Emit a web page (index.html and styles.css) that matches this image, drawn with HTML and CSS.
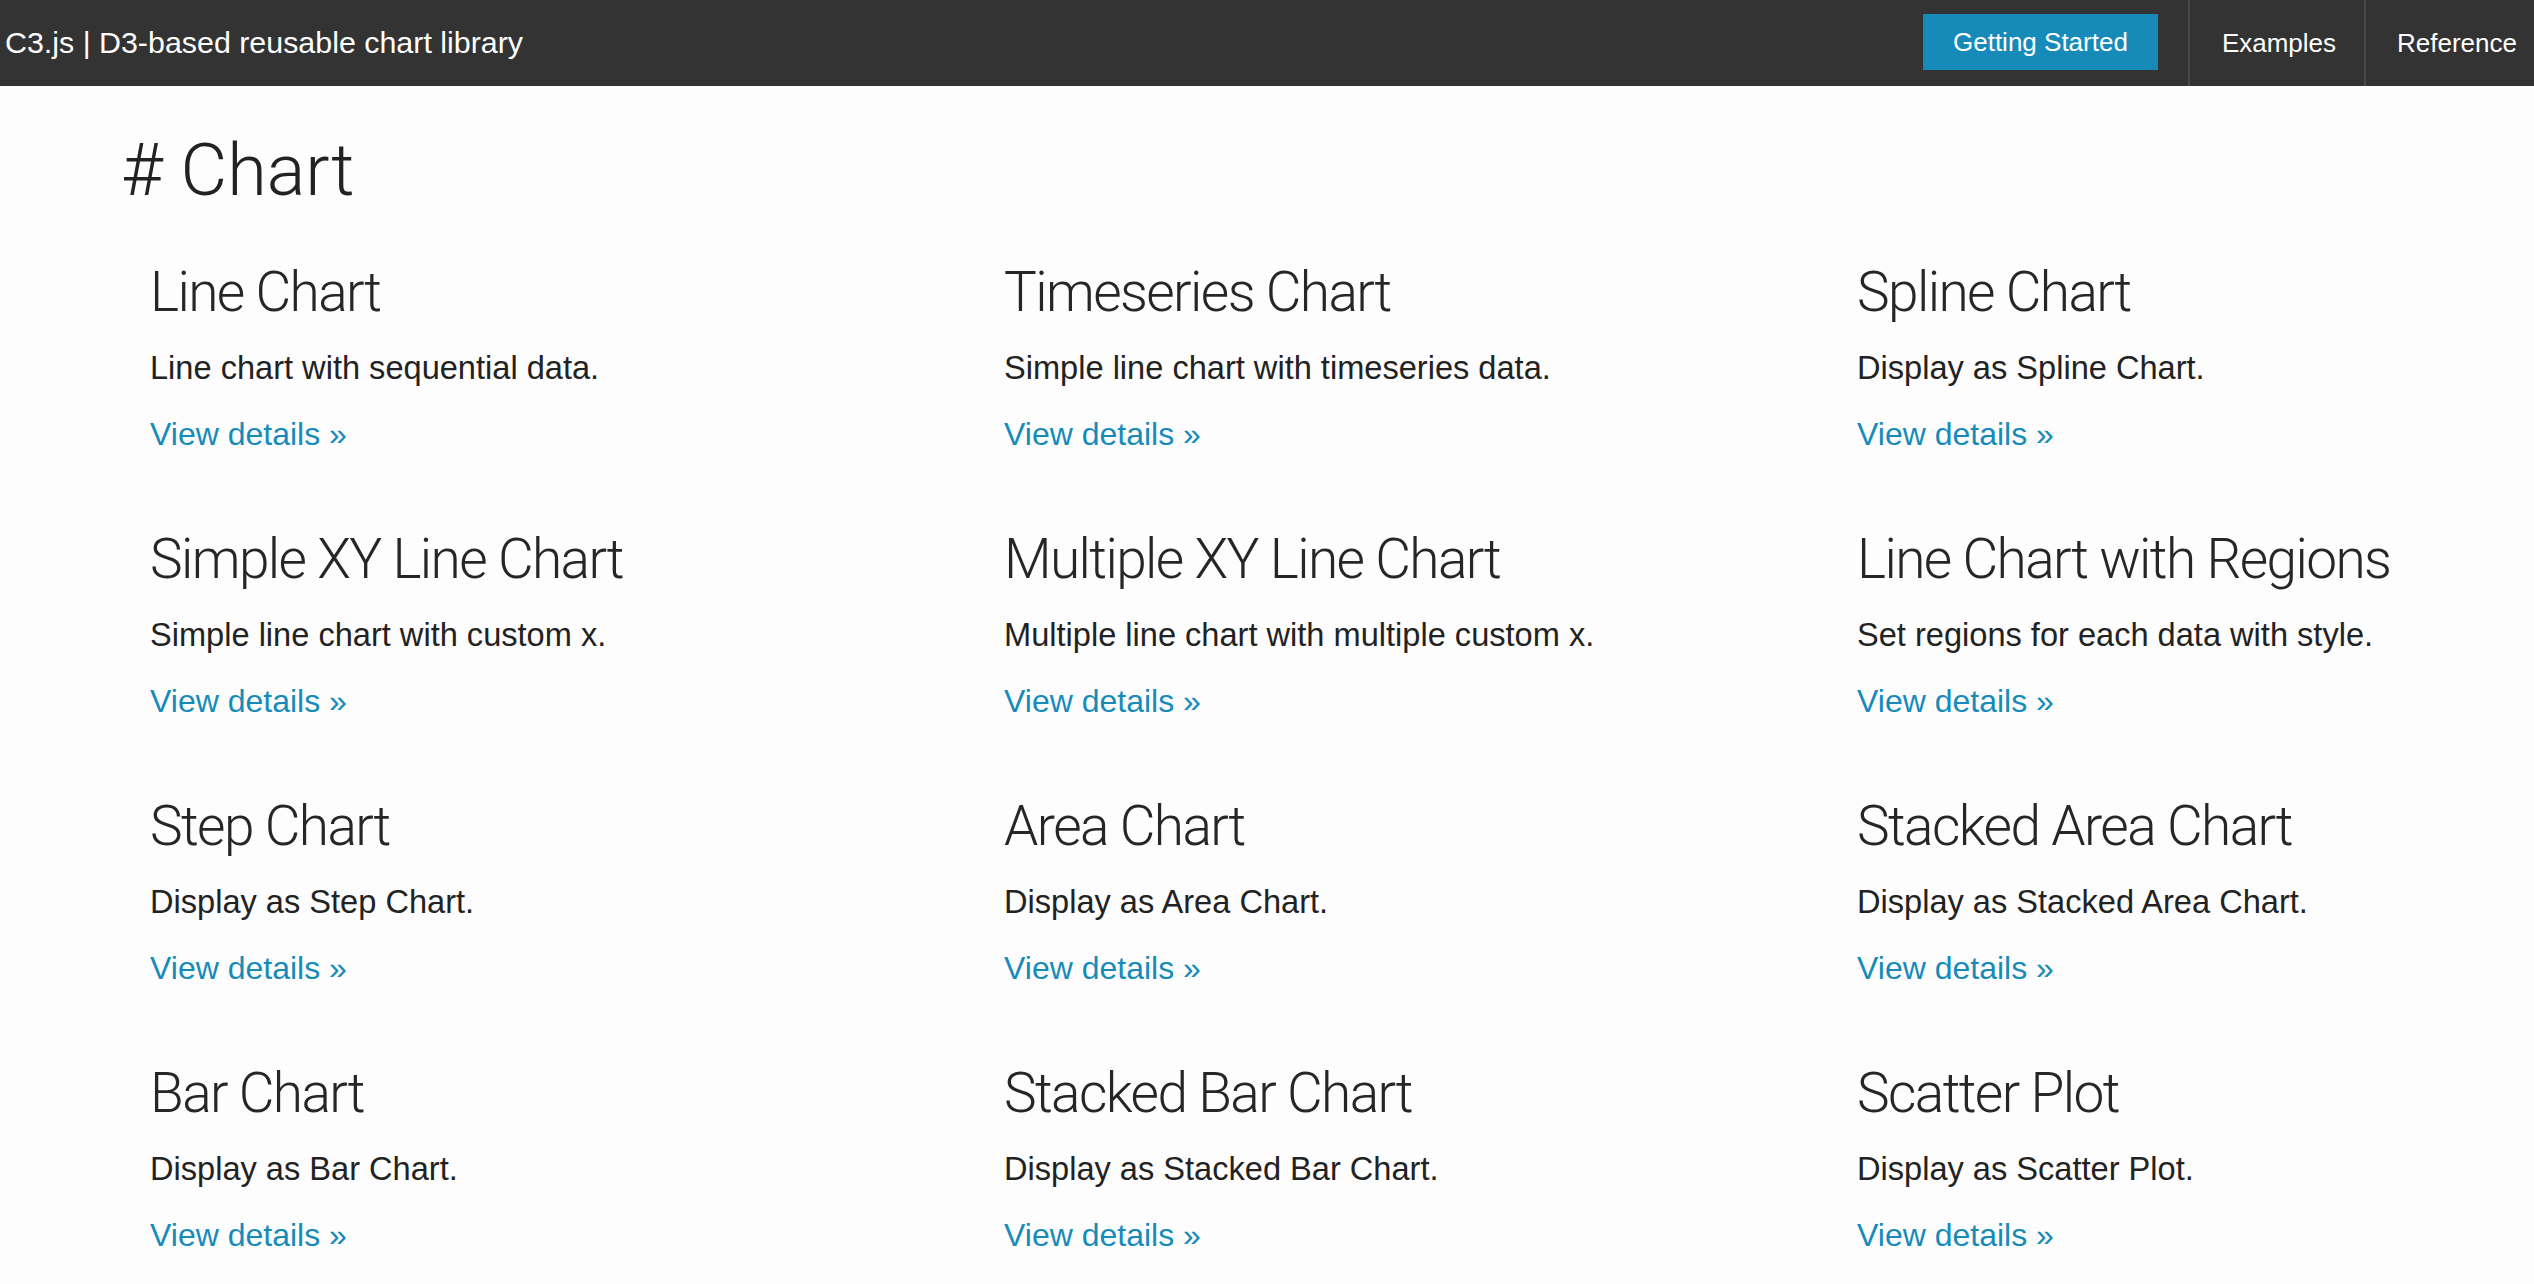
FILE: index.html
```html
<!DOCTYPE html>
<html lang="en">
<head>
<meta charset="utf-8">
<title>C3.js | D3-based reusable chart library</title>
<link rel="stylesheet" href="styles.css">
</head>
<body>
<header class="navbar">
  <a class="brand" href="#">C3.js | D3-based reusable chart library</a>
  <nav class="nav">
    <a class="nav-btn" href="#">Getting Started</a>
    <a class="nav-link" href="#">Examples</a>
    <a class="nav-link nav-last" href="#">Reference</a>
  </nav>
</header>
<main class="container">
  <h1 class="page-title"># Chart</h1>
  <div class="grid">
    <section class="card">
      <h3>Line Chart</h3>
      <p>Line chart with sequential data.</p>
      <p class="link-line"><a class="more" href="#">View details »</a></p>
    </section>
    <section class="card">
      <h3>Timeseries Chart</h3>
      <p>Simple line chart with timeseries data.</p>
      <p class="link-line"><a class="more" href="#">View details »</a></p>
    </section>
    <section class="card">
      <h3>Spline Chart</h3>
      <p>Display as Spline Chart.</p>
      <p class="link-line"><a class="more" href="#">View details »</a></p>
    </section>
    <section class="card">
      <h3>Simple XY Line Chart</h3>
      <p>Simple line chart with custom x.</p>
      <p class="link-line"><a class="more" href="#">View details »</a></p>
    </section>
    <section class="card">
      <h3>Multiple XY Line Chart</h3>
      <p>Multiple line chart with multiple custom x.</p>
      <p class="link-line"><a class="more" href="#">View details »</a></p>
    </section>
    <section class="card">
      <h3>Line Chart with Regions</h3>
      <p>Set regions for each data with style.</p>
      <p class="link-line"><a class="more" href="#">View details »</a></p>
    </section>
    <section class="card">
      <h3>Step Chart</h3>
      <p>Display as Step Chart.</p>
      <p class="link-line"><a class="more" href="#">View details »</a></p>
    </section>
    <section class="card">
      <h3>Area Chart</h3>
      <p>Display as Area Chart.</p>
      <p class="link-line"><a class="more" href="#">View details »</a></p>
    </section>
    <section class="card">
      <h3>Stacked Area Chart</h3>
      <p>Display as Stacked Area Chart.</p>
      <p class="link-line"><a class="more" href="#">View details »</a></p>
    </section>
    <section class="card">
      <h3>Bar Chart</h3>
      <p>Display as Bar Chart.</p>
      <p class="link-line"><a class="more" href="#">View details »</a></p>
    </section>
    <section class="card">
      <h3>Stacked Bar Chart</h3>
      <p>Display as Stacked Bar Chart.</p>
      <p class="link-line"><a class="more" href="#">View details »</a></p>
    </section>
    <section class="card">
      <h3>Scatter Plot</h3>
      <p>Display as Scatter Plot.</p>
      <p class="link-line"><a class="more" href="#">View details »</a></p>
    </section>
  </div>
</main>
</body>
</html>
```
FILE: styles.css
```css
* { box-sizing: border-box; }

html, body {
  margin: 0;
  padding: 0;
  background: #fdfdfd;
  overflow: hidden;
}

body {
  font-family: "Liberation Sans", Arial, sans-serif;
  color: #222222;
}

a { text-decoration: none; }

.navbar {
  height: 86px;
  background: #333333;
  display: flex;
  align-items: stretch;
  justify-content: space-between;
}

.brand {
  display: flex;
  align-items: center;
  padding-left: 5px;
  color: #ffffff;
  font-size: 30.4px;
  padding-bottom: 2px;
}

.nav {
  display: flex;
  align-items: stretch;
}

.nav-btn {
  align-self: center;
  height: 56px;
  margin-top: -2px;
  display: flex;
  align-items: center;
  padding: 0 30px;
  background: #168bba;
  color: #ffffff;
  font-size: 26px;
  margin-right: 30px;
}

.nav-link {
  display: flex;
  align-items: center;
  border-left: 2px solid #484848;
  padding: 0 28px 0 32px;
  color: #ffffff;
  font-size: 26px;
}

.nav-last {
  padding-right: 17px;
  padding-left: 31px;
}

.container {
  padding-left: 121px;
}

.page-title {
  margin: 45px 0 0 0;
  font-family: Roboto, "Liberation Sans", sans-serif;
  font-weight: 300;
  font-size: 72px;
  line-height: 80px;
  color: #222222;
}

.grid {
  display: grid;
  grid-template-columns: 854px 853px 1fr;
  padding-left: 29px;
  margin-top: 49px;
  row-gap: 72px;
}

.card h3 {
  margin: 0 0 23px 0;
  font-family: Roboto, "Liberation Sans", sans-serif;
  font-weight: 300;
  font-size: 55px;
  letter-spacing: -1.6px;
  line-height: 64px;
  color: #262626;
  white-space: nowrap;
}

.card p {
  margin: 0 0 24px 0;
  font-size: 32.6px;
  line-height: 42px;
  white-space: nowrap;
}

.card .link-line {
  font-size: 32px;
  margin-bottom: 0;
}

.more {
  color: #168bba;
}
```
